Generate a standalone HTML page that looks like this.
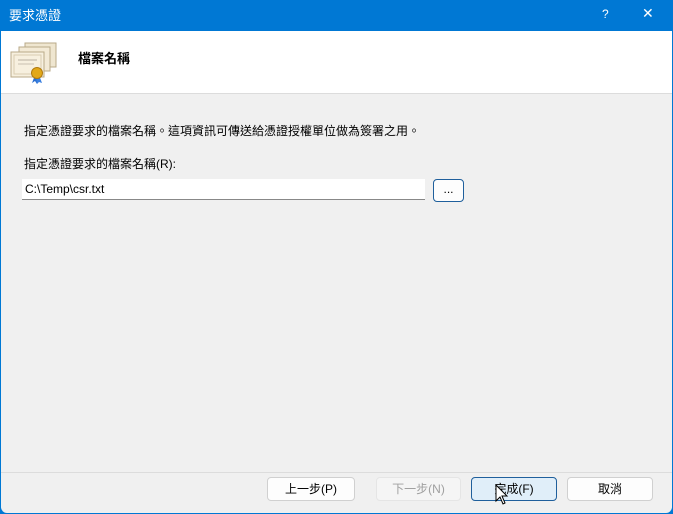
<!DOCTYPE html><html><head><meta charset="utf-8"><style>
*{margin:0;padding:0;box-sizing:border-box}
body{width:673px;height:514px;overflow:hidden;background:#0078d4;font-family:"Liberation Sans","Noto Sans CJK TC",sans-serif;font-size:12px;color:#000;position:relative}
.t{position:absolute;left:9px;top:5px;color:#fff;font-size:13px}
.q{position:absolute;left:602px;top:7px;color:#fff;font-size:12px}
.x{position:absolute;left:642px;top:5px;color:#fff;font-size:14px}
.win{position:absolute;left:1px;top:31px;width:671px;height:482px;background:#f0f0f0;border-radius:0 0 6px 6px}
.hd{position:absolute;left:0;top:0;width:671px;height:63px;background:#fff;border-bottom:1px solid #dcdcdc}
.btn{position:absolute;top:446px;height:24px;width:88px;background:#fdfdfd;border:1px solid #d0d0d0;border-radius:4px;text-align:center;line-height:22px;font-size:12px}
</style></head><body>
<div class="t">要求憑證</div><div class="q">?</div><div class="x">✕</div>
<div class="win">
<div class="hd">
<svg style="position:absolute;left:7px;top:9px" width="50" height="44" viewBox="0 0 50 44">
<rect x="17" y="3" width="31" height="24" fill="#efe6d0" stroke="#b8aa88"/>
<rect x="11" y="7" width="31" height="24" fill="#f3ead6" stroke="#b8aa88"/>
<rect x="3" y="12" width="33" height="25" fill="#f7f0df" stroke="#b8aa88"/>
<rect x="6" y="15" width="27" height="19" fill="none" stroke="#d8ccb0"/>
<line x1="10" y1="20" x2="29" y2="20" stroke="#b8b0a0"/><line x1="10" y1="24" x2="26" y2="24" stroke="#c8c0b0"/>
<path d="M27 35 l-3 8 3-2 2 3 2-8z" fill="#2a6fd0"/><path d="M31 35 l3 8 -3-1 -2 2 -1-7z" fill="#3a80e0"/>
<circle cx="29" cy="33" r="5.5" fill="#e2a818" stroke="#b07a10"/>
</svg>
<div style="position:absolute;left:77px;top:17px;font-size:13px;font-weight:bold">檔案名稱</div>
</div>
<div style="position:absolute;left:23px;top:91px">指定憑證要求的檔案名稱。這項資訊可傳送給憑證授權單位做為簽署之用。</div>
<div style="position:absolute;left:23px;top:124px">指定憑證要求的檔案名稱(R):</div>
<div style="position:absolute;left:21px;top:148px;width:403px;height:21px;background:#fff;border-bottom:1px solid #888;padding:3px 3px;font-size:12px">C:\Temp\csr.txt</div>
<div style="position:absolute;left:432px;top:148px;width:31px;height:23px;background:#fdfdfd;border:1px solid #1f5f9c;border-radius:4px;text-align:center;line-height:18px">...</div>
<div style="position:absolute;left:0;top:441px;width:671px;border-top:1px solid #dcdcdc"></div>
<div class="btn" style="left:266px">上一步(P)</div>
<div class="btn" style="left:375px;width:85px;color:#a0a0a0;background:#f5f5f5;border-color:#e5e5e5">下一步(N)</div>
<div class="btn" style="left:470px;width:86px;background:#e0eef9;border-color:#1f5f9c">完成(F)</div>
<div class="btn" style="left:566px;width:86px">取消</div>
<svg style="position:absolute;left:494px;top:453px" width="14" height="22" viewBox="0 0 14 22"><path d="M1 1 v16 l4-4 3 7 2-1-3-7 h5z" fill="#fff" stroke="#000"/></svg>
</div>
</body></html>
